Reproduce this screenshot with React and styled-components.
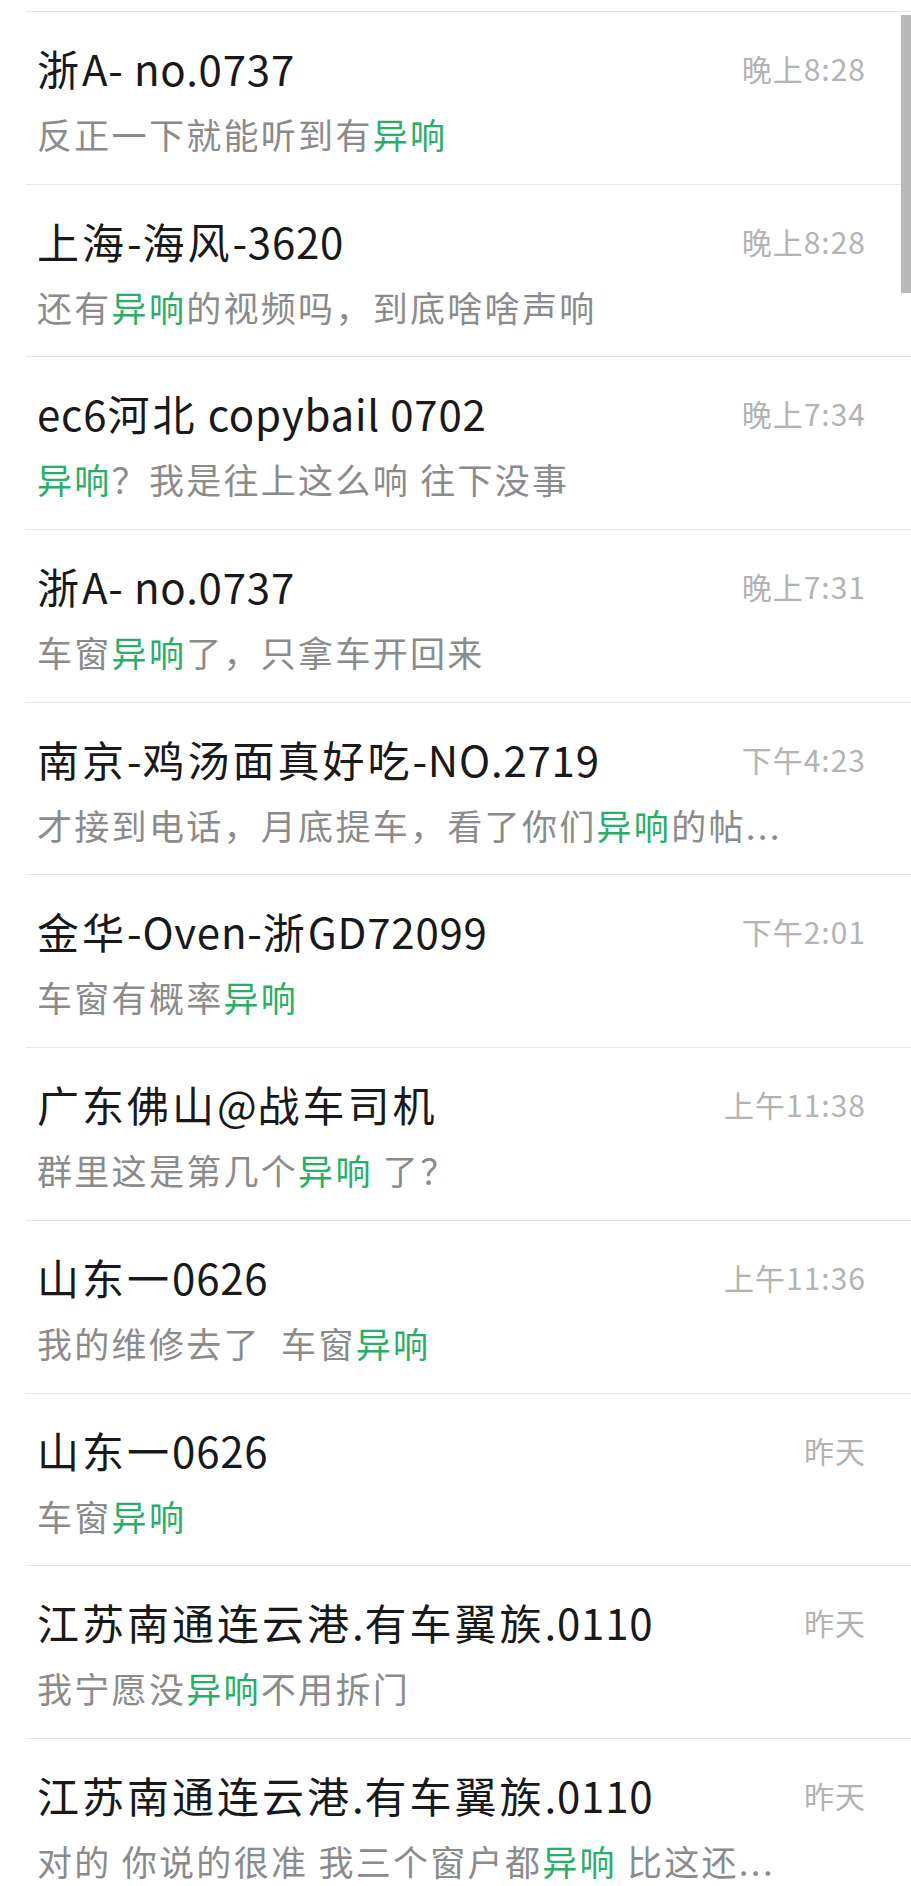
import React from 'react';
import styled, { createGlobalStyle } from 'styled-components';

const GlobalStyle = createGlobalStyle`
  html, body {
    margin: 0;
    padding: 0;
    background: #ffffff;
    overflow: hidden;
  }
  body {
    font-family: "Noto Sans CJK SC", "Noto Sans", sans-serif;
  }
`;

const chats = [
  { name: '浙A- no.0737', time: '晚上8:28', msg: ['反正一下就能听到有', '#异响'] },
  { name: '上海-海风-3620', time: '晚上8:28', msg: ['还有', '#异响', '的视频吗，到底啥啥声响'] },
  { name: 'ec6河北 copybail 0702', time: '晚上7:34', msg: ['#异响', '？我是往上这么响 往下没事'] },
  { name: '浙A- no.0737', time: '晚上7:31', msg: ['车窗', '#异响', '了，只拿车开回来'] },
  { name: '南京-鸡汤面真好吃-NO.2719', time: '下午4:23', msg: ['才接到电话，月底提车，看了你们', '#异响', '的帖...'] },
  { name: '金华-Oven-浙GD72099', time: '下午2:01', msg: ['车窗有概率', '#异响'] },
  { name: '广东佛山@战车司机', time: '上午11:38', msg: ['群里这是第几个', '#异响', ' 了？'] },
  { name: '山东一0626', time: '上午11:36', msg: ['我的维修去了  车窗', '#异响'] },
  { name: '山东一0626', time: '昨天', msg: ['车窗', '#异响'] },
  { name: '江苏南通连云港.有车翼族.0110', time: '昨天', msg: ['我宁愿没', '#异响', '不用拆门'] },
  { name: '江苏南通连云港.有车翼族.0110', time: '昨天', msg: ['对的 你说的很准 我三个窗户都', '#异响', ' 比这还...'] },
];

// han characters are set wider than the latin bits in the nick names
const splitRuns = (text) =>
  text.split(/([\u3000-\u9fff\uff00-\uffef]+)/).filter(Boolean);

const isHan = (run) => /[\u3000-\u9fff\uff00-\uffef]/.test(run);

export default function App() {
  return (
    <>
      <GlobalStyle />
      <Screen>
        <List>
          {chats.map((c, i) => (
            <Row key={i}>
              <TopLine>
                <Name>
                  {splitRuns(c.name).map((run, k) =>
                    isHan(run) ? <Han key={k}>{run}</Han> : <span key={k}>{run}</span>
                  )}
                </Name>
                <Time>{c.time}</Time>
              </TopLine>
              <Message>
                {c.msg.map((part, j) =>
                  part.startsWith('#')
                    ? <Keyword key={j}>{part.slice(1)}</Keyword>
                    : <span key={j}>{part}</span>
                )}
              </Message>
            </Row>
          ))}
        </List>
        <ScrollThumb />
      </Screen>
    </>
  );
}

const Screen = styled.div`
  position: relative;
  height: 100vh;
  overflow: hidden;
  background: #ffffff;
`;

const List = styled.div`
  padding-top: 11px;
  margin-left: 26px;
`;

const Row = styled.div`
  box-sizing: border-box;
  height: 172.7px;
  border-top: 1px solid #e6e6e6;
  padding: 30px 45px 0 11px;
  display: flex;
  flex-direction: column;
`;

const TopLine = styled.div`
  display: flex;
  align-items: center;
  justify-content: space-between;
  height: 52px;
`;

const Name = styled.div`
  font-size: 42px;
  line-height: 52px;
  letter-spacing: 0.8px;
  color: #191919;
  white-space: pre;
`;

const Han = styled.span`
  letter-spacing: 3px;
`;

const Time = styled.div`
  font-size: 30px;
  line-height: 52px;
  letter-spacing: 1px;
  color: #b3b3b3;
  white-space: nowrap;
`;

const Message = styled.div`
  margin-top: 17px;
  font-size: 35px;
  line-height: 46px;
  letter-spacing: 2.3px;
  color: #8b8b8b;
  white-space: pre;
`;

const Keyword = styled.span`
  color: #2aae67;
`;

const ScrollThumb = styled.div`
  position: absolute;
  top: 15px;
  right: 0;
  width: 10px;
  height: 278px;
  background: #b9b9b9;
`;
